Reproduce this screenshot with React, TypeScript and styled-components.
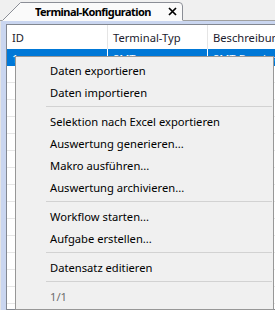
import React from "react";
import styled, { createGlobalStyle } from "styled-components";

const GlobalStyle = createGlobalStyle`
  html, body {
    margin: 0;
    padding: 0;
    background: #f0f0f0;
    overflow: hidden;
  }

  body {
    font-family: "Noto Sans", "Segoe UI", sans-serif;
    font-size: 11.2px;
    color: #000;
  }
`;

const Window = styled.div`
  position: relative;
  width: 275px;
  height: 310px;
  display: flex;
  flex-direction: column;
  overflow: hidden;
`;

const TabStrip = styled.div`
  height: 20px;
  display: flex;
  align-items: flex-end;
  padding-left: 2px;
  border-bottom: 1px solid #a0a0a0;
`;

const Tab = styled.div`
  position: relative;
  width: 181px;
  height: 21px;
  margin-bottom: -1px;
  display: flex;
  align-items: center;
  padding: 1px 6px 0 33px;
  box-sizing: border-box;
  z-index: 1;

  svg.shape {
    position: absolute;
    left: 0;
    top: 0;
    z-index: -1;
  }

  .title {
    flex: 1;
    font-weight: 700;
    font-size: 11px;
    letter-spacing: -0.55px;
    white-space: nowrap;
    overflow: hidden;
  }
`;

const Panel = styled.div`
  flex: 1;
  background: #cad6f0;
  border-left: 1px solid #e4e4e4;
  padding: 3px 0 0 5px;
  min-height: 0;
`;

const Grid = styled.div`
  background: #fff;
  border: 1px solid #828790;
  border-right: none;
  height: 100%;
  box-sizing: border-box;
  width: 400px;
`;

const Row = styled.div<{ $header?: boolean; $selected?: boolean }>`
  display: grid;
  grid-template-columns: 101px 100px 1fr;
  height: ${(p) => (p.$header ? "24px" : "17px")};
  box-sizing: border-box;
  background: ${(p) => (p.$selected ? "#0078d7" : "transparent")};
  color: ${(p) => (p.$selected ? "#fff" : p.$header ? "#1b1b2e" : "#000")};
  border-bottom: ${(p) => (p.$header || p.$selected ? "none" : "1px solid #e6e6e6")};
`;

const Cell = styled.div<{ $selected?: boolean }>`
  display: flex;
  align-items: ${(p) => (p.$selected ? "flex-end" : "center")};
  padding-left: 5px;
  border-right: 1px solid ${(p) => (p.$selected ? "#ffffff" : "#e5e5e5")};
  white-space: nowrap;
  overflow: hidden;
`;

const Menu = styled.div`
  position: absolute;
  left: 15px;
  top: 56px;
  width: 259px;
  background: #f0f0f0;
  border: 1px solid #979797;
  padding: 2px 0;
  box-sizing: border-box;
  z-index: 5;
`;

const MenuItem = styled.div<{ $disabled?: boolean }>`
  height: 22px;
  display: flex;
  align-items: center;
  padding-left: 34px;
  color: ${(p) => (p.$disabled ? "#6d6d6d" : "#000")};
  white-space: nowrap;
`;

const Separator = styled.div`
  height: 7px;
  display: flex;
  align-items: center;
  padding-left: 30px;
  padding-right: 1px;

  &::after {
    content: "";
    flex: 1;
    height: 1px;
    background: #d2d2d2;
  }
`;

const TabShape = () => (
  <svg className="shape" width="181" height="21" viewBox="0 0 181 21">
    <path d="M0 21 L0.5 20 L18.5 2 H177 Q180.5 2 180.5 5.5 V21 Z" fill="#fafafa" />
    <path
      d="M0.5 20.5 L18.5 2.5 H177 Q180.5 2.5 180.5 6 V20"
      fill="none"
      stroke="#8b8e96"
      strokeWidth="1"
    />
  </svg>
);

const CloseIcon = () => (
  <svg width="9" height="9" viewBox="0 0 9 9">
    <path d="M1 1 L8 8 M8 1 L1 8" stroke="#000" strokeWidth="1.7" />
  </svg>
);

type Entry = { label?: string; separator?: boolean; disabled?: boolean };

const entries: Entry[] = [
  { label: "Daten exportieren" },
  { label: "Daten importieren" },
  { separator: true },
  { label: "Selektion nach Excel exportieren" },
  { label: "Auswertung generieren..." },
  { label: "Makro ausführen..." },
  { label: "Auswertung archivieren..." },
  { separator: true },
  { label: "Workflow starten..." },
  { label: "Aufgabe erstellen..." },
  { separator: true },
  { label: "Datensatz editieren" },
  { separator: true },
  { label: "1/1", disabled: true },
];

const emptyRows = Array.from({ length: 15 }, (_, i) => i);

export default function App() {
  return (
    <>
      <GlobalStyle />
      <Window>
        <TabStrip>
          <Tab>
            <TabShape />
            <span className="title">Terminal-Konfiguration</span>
            <CloseIcon />
          </Tab>
        </TabStrip>
        <Panel>
          <Grid>
            <Row $header>
              <Cell>ID</Cell>
              <Cell>Terminal-Typ</Cell>
              <Cell>Beschreibung</Cell>
            </Row>
            <Row $selected>
              <Cell $selected>1</Cell>
              <Cell $selected>SMT</Cell>
              <Cell $selected>SMT-Beschreibung</Cell>
            </Row>
            {emptyRows.map((i) => (
              <Row key={i}>
                <Cell />
                <Cell />
                <Cell />
              </Row>
            ))}
          </Grid>
        </Panel>
        <Menu>
          {entries.map((e, i) =>
            e.separator ? (
              <Separator key={i} />
            ) : (
              <MenuItem key={i} $disabled={e.disabled}>
                {e.label}
              </MenuItem>
            )
          )}
        </Menu>
      </Window>
    </>
  );
}
